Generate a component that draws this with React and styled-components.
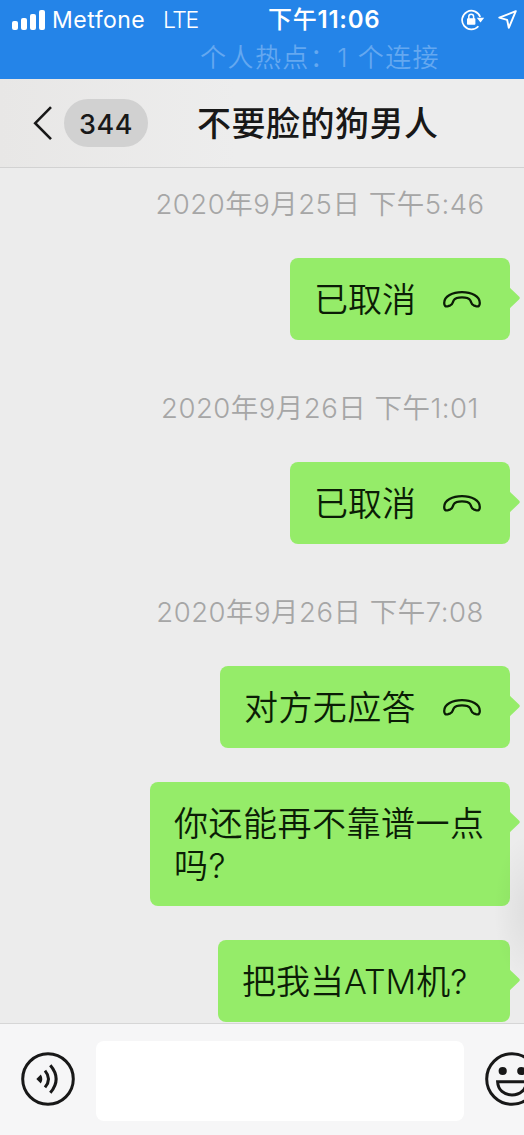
import React from "react";
import styled, { createGlobalStyle } from "styled-components";

const GlobalStyle = createGlobalStyle`
  * { box-sizing: border-box; }
  body { margin: 0; font-family: Inter, "Noto Sans CJK SC", sans-serif; }
`;

const Screen = styled.div`
  position: relative;
  width: 524px;
  height: 1135px;
  overflow: hidden;
  display: flex;
  flex-direction: column;
  background: #ececec;
`;

const StatusBar = styled.header`
  flex: none;
  height: 79px;
  background: #2484e8;
  color: #fff;
`;

const StatusRow = styled.div`
  display: grid;
  grid-template-columns: 268px 1fr auto;
  align-items: center;
  height: 39px;
  padding: 0 7px 0 0;
`;

const Carrier = styled.div`
  display: flex;
  align-items: center;
  padding-left: 12px;
  font-size: 23px;
  line-height: 38px;
  white-space: pre;
`;

const CarrierName = styled.span`
  margin-left: 7px;
  width: 111px;
  font-size: 23px;
  letter-spacing: 0.5px;
`;

const Network = styled.span`
  font-weight: 350;
  letter-spacing: -1.4px;
`;

const Clock = styled.div`
  font-size: 24px;
  font-weight: 600;
  line-height: 38px;
  letter-spacing: 0.75px;
  white-space: nowrap;
`;

const ClockPrefix = styled.span`
  font-weight: 500;
`;

const StatusIcons = styled.div`
  display: flex;
  align-items: center;
  gap: 13px;
`;

const Hotspot = styled.div`
  padding-left: 200px;
  color: #64a8f0;
  font-size: 26px;
  font-weight: 350;
  line-height: 38px;
  letter-spacing: 1.45px;
  white-space: pre;
`;

const NavBar = styled.nav`
  flex: none;
  display: flex;
  align-items: center;
  height: 89px;
  padding-left: 32px;
  border-bottom: 1px solid #d2d2d2;
  background: linear-gradient(90deg, #e8e7e6, #ededed 45%);
  color: #181818;
`;

const Unread = styled.span`
  width: 84px;
  height: 48px;
  margin-left: 11px;
  border-radius: 24px;
  background: #d1d1d1;
  font-size: 27px;
  font-weight: 450;
  line-height: 51px;
  letter-spacing: 0.6px;
  text-align: center;
`;

const Title = styled.h1`
  margin: 2px 0 0 49px;
  font-size: 34px;
  font-weight: 500;
  line-height: 48px;
  letter-spacing: 0.5px;
  white-space: nowrap;
`;

const Chat = styled.main`
  flex: none;
  height: 855px;
  overflow: hidden;
  display: flex;
  flex-direction: column;
  align-items: flex-end;
  padding: 16px 14px 0 0;
`;

const Timestamp = styled.time`
  flex: none;
  height: 40px;
  width: 380px;
  margin: 0 0 34px;
  color: #a6a6a6;
  font-size: 27.5px;
  line-height: 40px;
  font-weight: 350;
  text-align: center;
  white-space: nowrap;
  letter-spacing: 0.5px;
`;

const Bubble = styled.div`
  position: relative;
  flex: none;
  display: flex;
  justify-content: space-between;
  align-items: center;
  width: ${(p) => p.$width}px;
  margin-bottom: ${(p) => p.$gap}px;
  padding: 21px ${(p) => (p.$call ? 28 : 20)}px 19px 24px;
  border-radius: 8px;
  background: #95ec69;
  color: #0b1d06;
  font-size: 34px;
  font-weight: 350;
  line-height: 42px;
  letter-spacing: ${(p) => p.$spacing || 0}px;
`;

const Tail = styled.svg`
  position: absolute;
  left: 100%;
  top: 28px;
`;

const InputBar = styled.footer`
  flex: none;
  display: flex;
  align-items: center;
  height: 112px;
  padding: 0 0 2px 20px;
  border-top: 1px solid #d6d6d6;
  background: #f6f6f7;
`;

const VoiceButton = styled.button`
  display: flex;
  padding: 0;
  border: 0;
  background: none;
`;

const EmojiButton = styled(VoiceButton)`
  flex: none;
  margin-left: 20px;
`;

const TextField = styled.input`
  flex: none;
  width: 368px;
  height: 80px;
  margin: 4px 0 0 20px;
  border: 0;
  border-radius: 8px;
  background: #fff;
  outline: 0;
`;

const EdgeShadow = styled.div`
  position: absolute;
  right: -36px;
  top: 835px;
  width: 66px;
  height: 150px;
  background: radial-gradient(closest-side, rgba(0, 0, 0, 0.06), transparent);
  pointer-events: none;
`;

function Signal() {
  return (
    <svg width="33" height="20" viewBox="0 0 33 20" fill="#fff">
      <rect x="0" y="11" width="6" height="9" rx="2" />
      <rect x="9" y="8" width="6" height="12" rx="2" />
      <rect x="18" y="4" width="6" height="16" rx="2" />
      <rect x="27" y="0" width="6" height="20" rx="2" />
    </svg>
  );
}

function RotationLock() {
  return (
    <svg width="24" height="22" viewBox="0 0 24 22" fill="none" stroke="#fff">
      <path d="M17.4 17.2A9.3 9.3 0 1 1 19.2 8" strokeWidth="1.7" />
      <path d="M15.8 8.8H23.2L19.5 13.4Z" fill="#fff" stroke="none" />
      <rect x="6" y="9.2" width="8.4" height="6.6" rx="0.8" fill="#fff" stroke="none" />
      <path d="M7.8 10V7.6a2.4 2.4 0 0 1 4.8 0V10" strokeWidth="1.5" />
    </svg>
  );
}

function LocationArrow() {
  return (
    <svg width="19" height="19" viewBox="0 0 19 19" fill="none" stroke="#fff" strokeWidth="1.9" strokeLinejoin="round">
      <path d="M17.8 1.2 1.3 7.6 9.1 9.8 10.8 17.8Z" />
    </svg>
  );
}

function BackIcon() {
  return (
    <svg width="21" height="36" viewBox="0 0 21 36" fill="none" stroke="#181818" strokeWidth="2.6">
      <path d="M19 2.2 3.2 18.2 19 34.2" />
    </svg>
  );
}

function PhoneIcon() {
  return (
    <svg width="40" height="20" viewBox="0 0 40 20" fill="none" stroke="#0b1d06" strokeWidth="2.3" strokeLinejoin="round">
      <path d="M2.2 13C2.2 6.2 10.5 2.2 20 2.2S37.8 6.2 37.8 13C37.8 16 36.5 17 33.8 16.1L31.6 15.3C29 14.2 29.6 12.1 28 9.9C26.8 8 24.2 7.3 20 7.3S13.2 8 12 9.9C10.4 12.1 11 14.2 8.4 15.3L6.2 16.1C3.5 17 2.2 16 2.2 13Z" />
    </svg>
  );
}

function VoiceIcon() {
  return (
    <svg width="56" height="56" viewBox="0 0 56 56" fill="none" stroke="#181818" strokeWidth="3">
      <circle cx="28" cy="28" r="25.3" />
      <path d="M16.3 28 20.8 23.4Q23.8 28 20.8 32.6Z" fill="#181818" stroke="none" />
      <path d="M25 19.6Q32 28 25 36.4" />
      <path d="M30.3 14.2Q42 28 30.3 41.8" />
    </svg>
  );
}

function EmojiIcon() {
  return (
    <svg width="56" height="56" viewBox="0 0 56 56" fill="none" stroke="#181818" strokeWidth="3">
      <circle cx="28" cy="28" r="25.3" />
      <circle cx="18.7" cy="20" r="4.1" fill="#181818" stroke="none" />
      <circle cx="37.3" cy="20" r="4.1" fill="#181818" stroke="none" />
      <path d="M13.6 30.8H42.4C42 39 36 44 28 44S14 39 13.6 30.8Z" />
    </svg>
  );
}

function Message({ width, gap = 34, spacing, call, children }) {
  return (
    <Bubble $width={width} $gap={gap} $spacing={spacing} $call={call}>
      <span>{children}</span>
      {call && <PhoneIcon />}
      <Tail width="11" height="24" viewBox="0 0 11 24" fill="#95ec69">
        <path d="M-1 0C0 2 1 3 2.2 4L9 10.4Q10.6 12 9 13.6L2.2 20C1 21 0 22 -1 24Z" />
      </Tail>
    </Bubble>
  );
}

export default function App() {
  return (
    <Screen>
      <GlobalStyle />
      <StatusBar>
        <StatusRow>
          <Carrier>
            <Signal />
            <CarrierName>Metfone</CarrierName>
            <Network>LTE</Network>
          </Carrier>
          <Clock><ClockPrefix>下午</ClockPrefix>11:06</Clock>
          <StatusIcons>
            <RotationLock />
            <LocationArrow />
          </StatusIcons>
        </StatusRow>
        <Hotspot>个人热点：1 个连接</Hotspot>
      </StatusBar>
      <NavBar>
        <BackIcon />
        <Unread>344</Unread>
        <Title>不要脸的狗男人</Title>
      </NavBar>
      <Chat>
        <Timestamp>2020年9月25日 下午5:46</Timestamp>
        <Message width={220} gap={48} call>已取消</Message>
        <Timestamp>2020年9月26日 下午1:01</Timestamp>
        <Message width={220} gap={48} call>已取消</Message>
        <Timestamp>2020年9月26日 下午7:08</Timestamp>
        <Message width={290} spacing={0.4} call>对方无应答</Message>
        <Message width={360} spacing={0.5}>你还能再不靠谱一点<br />吗?</Message>
        <Message width={292}>把我当ATM机?</Message>
      </Chat>
      <InputBar>
        <VoiceButton aria-label="语音"><VoiceIcon /></VoiceButton>
        <TextField />
        <EmojiButton aria-label="表情"><EmojiIcon /></EmojiButton>
      </InputBar>
      <EdgeShadow />
    </Screen>
  );
}
